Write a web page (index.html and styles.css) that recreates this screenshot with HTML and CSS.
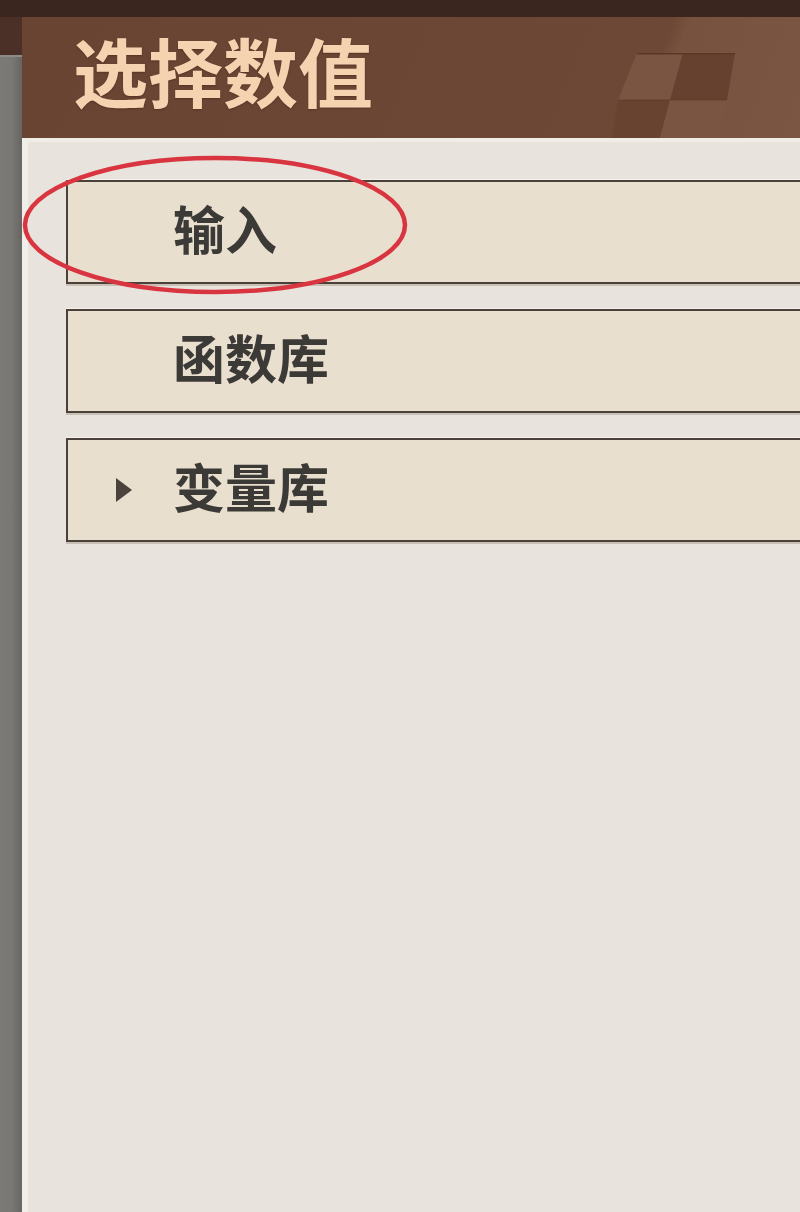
FILE: index.html
```html
<!DOCTYPE html>
<html lang="zh-CN">
<head>
<meta charset="utf-8">
<title>选择数值</title>
<link rel="stylesheet" href="styles.css">
</head>
<body>
<div class="page">
  <div class="topbar"></div>
  <div class="main">
    <div class="side"><div class="side-top"></div></div>
    <div class="panel">
      <div class="header">
        <h1 class="title">选择数值</h1>
        <svg class="deco" width="125" height="85" viewBox="0 0 125 85" aria-hidden="true">
          <polygon points="27,0 73,0 60,47 8,47" fill="#7a5541"/>
          <polygon points="73,0 125,0 117,47 60,47" fill="#66412f"/>
          <polygon points="8,47 60,47 50,85 2,85" fill="#68432f"/>
          <polygon points="60,47 117,47 110,85 50,85" fill="#7a5642"/>
          <line x1="27" y1="0.8" x2="125" y2="0.8" stroke="#5a3828" stroke-width="1.6"/>
          <line x1="8" y1="47" x2="117" y2="47" stroke="#5e3b2b" stroke-width="1.2" opacity="0.7"/>
        </svg>
      </div>
      <div class="list">
        <div class="item"><span class="caret"></span><span class="label">输入</span></div>
        <div class="item"><span class="caret"></span><span class="label">函数库</span></div>
        <div class="item">
          <span class="caret">
            <svg width="18" height="26" viewBox="0 0 18 26" aria-hidden="true"><polygon points="1,1 17,13 1,25" fill="#4a433c"/></svg>
          </span>
          <span class="label">变量库</span>
        </div>
      </div>
    </div>
  </div>
  <svg class="annot" width="800" height="320" viewBox="0 0 800 320" aria-hidden="true">
    <ellipse cx="215" cy="225" rx="190" ry="67" fill="none" stroke="#d93540" stroke-width="4.5"/>
  </svg>
</div>
</body>
</html>
```

FILE: styles.css
```css
html, body {
  margin: 0;
  padding: 0;
}

body {
  width: 800px;
  height: 1212px;
  overflow: hidden;
  background: #787672;
  font-family: "Noto Sans CJK SC", "Noto Sans", sans-serif;
}

.page {
  position: relative;
  display: flex;
  flex-direction: column;
  height: 1212px;
}

.topbar {
  flex: none;
  height: 17px;
  background: #3a251f;
}

.main {
  flex: 1;
  display: flex;
  min-height: 0;
}

.side {
  flex: none;
  width: 22px;
  background: linear-gradient(90deg, #7c7a76 0%, #7a7874 55%, #676561 100%);
}

.side-top {
  height: 38px;
  background: #4a3027;
  border-bottom: 2px solid #8e8a86;
}

.panel {
  flex: 1;
  min-width: 0;
  display: flex;
  flex-direction: column;
  background: #e8e3dc;
}

.header {
  flex: none;
  height: 121px;
  box-sizing: border-box;
  padding: 15px 0 0 51px;
  display: flex;
  align-items: flex-start;
  background: linear-gradient(112deg, #6a4433 0%, #6d4836 79%, #77523e 81%, #7b5642 100%);
}

.title {
  margin: 0;
  font-size: 75px;
  line-height: 1;
  font-weight: 700;
  color: #f6d3b0;
  text-shadow: 0 1px 2px rgba(40, 20, 10, 0.35);
  letter-spacing: 0;
}

.deco {
  align-self: flex-end;
  margin-left: auto;
  margin-right: 65px;
  flex: none;
}

.list {
  flex: 1;
  display: flex;
  flex-direction: column;
  gap: 25px;
  border-left: 6px solid #f0eee9;
  border-top: 4px solid #f0ece6;
  padding: 38px 0 0 38px;
}

.item {
  height: 104px;
  box-sizing: border-box;
  display: flex;
  align-items: center;
  padding: 0 0 8px 47px;
  margin-right: -6px;
  border: 2px solid #4a413a;
  background: #e9dfcf;
  box-shadow: 0 2px 0 #c8bfb5, 0 -1px 0 #f7f2e9;
}

.caret {
  flex: none;
  width: 58px;
  display: flex;
  align-items: center;
  padding-top: 8px;
}

.label {
  font-size: 52px;
  line-height: 1;
  font-weight: 700;
  color: #3c3a37;
}

.annot {
  position: absolute;
  left: 0;
  top: 0;
  pointer-events: none;
}
```
